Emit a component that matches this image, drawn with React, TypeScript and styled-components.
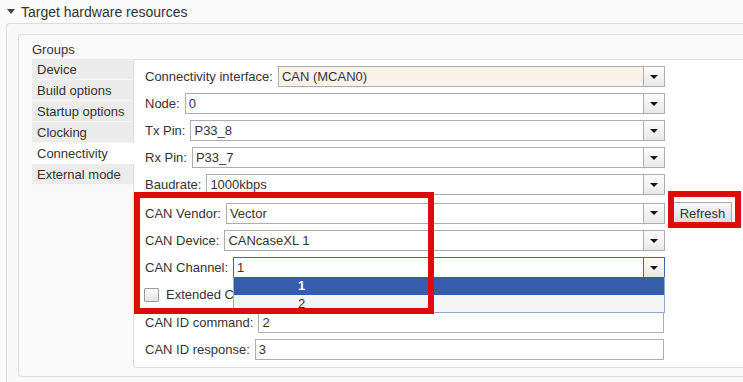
import React from 'react'
import styled, { createGlobalStyle } from 'styled-components'

const GlobalStyle = createGlobalStyle`
  body {
    margin: 0;
    background: #fafafa;
    font-family: 'Liberation Sans', Arial, sans-serif;
    color: #333;
  }
  * {
    box-sizing: border-box;
  }
`

const Page = styled.div`
  position: relative;
  width: 743px;
  height: 382px;
  overflow: hidden;
  background: #fafafa;
`

const SectionHeader = styled.div`
  display: flex;
  align-items: center;
  height: 23px;
  padding-left: 7px;
  font-size: 14px;
  color: #333;
`

const Caret = styled.span`
  width: 0;
  height: 0;
  margin-right: 6px;
  border-left: 4px solid transparent;
  border-right: 4px solid transparent;
  border-top: 5px solid #444;
`

const OuterBox = styled.div`
  margin-left: 6px;
  padding: 10px 0 0 11px;
  height: 370px;
  border: 1px solid #ddd;
  border-right: none;
  border-radius: 4px 0 0 0;
  background: #f9f9f9;
`

const GroupsBox = styled.div`
  padding: 6px 0 8px 13px;
  border: 1px solid #ddd;
  border-right: none;
  border-radius: 4px 0 0 4px;
  background: #fafafa;
`

const GroupsTitle = styled.div`
  height: 18px;
  font-size: 13px;
  line-height: 18px;
`

const GroupsBody = styled.div`
  display: flex;
`

const TabList = styled.div`
  display: flex;
  flex-direction: column;
  width: 101px;
  flex-shrink: 0;
`

const Tab = styled.div<{ active?: boolean }>`
  position: relative;
  z-index: 1;
  height: 21px;
  margin-right: ${({ active }) => (active ? '-1px' : '0')};
  padding-left: 5px;
  font-size: 13px;
  line-height: 21px;
  color: #333;
  background: ${({ active }) => (active ? '#fff' : '#ececec')};
  border-bottom: 1px solid ${({ active }) => (active ? '#fff' : '#f6f6f6')};
`

const ContentPanel = styled.div`
  flex: 1;
  height: 309px;
  padding: 6px 0 0 11px;
  background: #fff;
  border: 1px solid #ddd;
  border-right: none;
  border-radius: 0 0 0 4px;
`

const Form = styled.div`
  display: flex;
  flex-direction: column;
  gap: 6px;
`

const Row = styled.div<{ extraTop?: number }>`
  display: flex;
  align-items: center;
  margin-top: ${({ extraTop }) => extraTop ?? 0}px;
`

const FieldLine = styled.div`
  display: flex;
  align-items: center;
  width: 520px;
  height: 21px;
`

const Label = styled.span`
  margin-right: 5px;
  font-size: 13px;
  white-space: nowrap;
  color: #333;
`

const SelectBox = styled.div<{ tint?: boolean; focused?: boolean }>`
  position: relative;
  flex: 1;
  display: flex;
  height: 21px;
  border: 1px solid ${({ focused }) => (focused ? '#3b6aae' : '#adadad')};
  background: ${({ tint }) => (tint ? '#fbf3e9' : '#fff')};
`

const SelectValue = styled.span`
  flex: 1;
  padding-left: 3px;
  font-size: 13px;
  line-height: 19px;
  color: #333;
`

const DropButton = styled.span<{ focused?: boolean }>`
  display: flex;
  align-items: center;
  justify-content: center;
  width: 21px;
  border-left: 1px solid ${({ focused }) => (focused ? '#3b6aae' : '#adadad')};
  background: linear-gradient(#fdfdfd, #e8e8e8);
  &::after {
    content: '';
    width: 0;
    height: 0;
    border-left: 4px solid transparent;
    border-right: 4px solid transparent;
    border-top: 4px solid #111;
  }
`

const TextInput = styled.div`
  flex: 1;
  height: 21px;
  margin-right: 1px;
  padding-left: 3px;
  border: 1px solid #adadad;
  font-size: 13px;
  line-height: 19px;
  color: #333;
`

const RefreshButton = styled.button`
  height: 22px;
  width: 59px;
  margin-left: 8px;
  padding: 0;
  border: 1px solid #aaa;
  background: linear-gradient(#f8f8f8, #dcdcdc);
  font-family: 'Liberation Sans', Arial, sans-serif;
  font-size: 13px;
  color: #333;
`

const CheckBox = styled.span`
  width: 15px;
  height: 14px;
  margin: 0 7px 0 -1px;
  border: 1px solid #999;
  border-radius: 1px;
  background: linear-gradient(#fbfbfb, #e4e4e4);
`

const DropList = styled.div`
  position: absolute;
  z-index: 2;
  top: 100%;
  left: -1px;
  right: -1px;
  border: 1px solid #8aaed6;
  border-top: none;
  background: #f5f5f5;
`

const DropItem = styled.div<{ selected?: boolean }>`
  height: ${({ selected }) => (selected ? '18px' : '17px')};
  padding-left: 64px;
  font-size: 13px;
  line-height: 18px;
  font-weight: ${({ selected }) => (selected ? 'bold' : 'normal')};
  color: ${({ selected }) => (selected ? '#fff' : '#333')};
  background: ${({ selected }) => (selected ? '#365cab' : '#f5f5f5')};
`

const RedMark = styled.div<{ x: number; y: number; w: number; h: number }>`
  position: absolute;
  z-index: 5;
  left: ${({ x }) => x}px;
  top: ${({ y }) => y}px;
  width: ${({ w }) => w}px;
  height: ${({ h }) => h}px;
  border: 6px solid #e10a0a;
`

type SelectProps = {
  label: string
  value: string
  tint?: boolean
}

const SelectRow: React.FC<SelectProps & { extraTop?: number; children?: React.ReactNode }> = ({
  label,
  value,
  tint,
  extraTop,
  children,
}) => (
  <Row extraTop={extraTop}>
    <FieldLine>
      <Label>{label}</Label>
      <SelectBox tint={tint}>
        <SelectValue>{value}</SelectValue>
        <DropButton />
      </SelectBox>
    </FieldLine>
    {children}
  </Row>
)

const tabs = ['Device', 'Build options', 'Startup options', 'Clocking', 'Connectivity', 'External mode']

export default function App() {
  return (
    <>
      <GlobalStyle />
      <Page>
        <SectionHeader>
          <Caret />
          {'Target hardware resources'}
        </SectionHeader>
        <OuterBox>
          <GroupsBox>
            <GroupsTitle>{'Groups'}</GroupsTitle>
            <GroupsBody>
              <TabList>
                {tabs.map((t) => (
                  <Tab key={t} active={t === 'Connectivity'}>
                    {t}
                  </Tab>
                ))}
              </TabList>
              <ContentPanel>
                <Form>
                  <SelectRow label="Connectivity interface:" value="CAN (MCAN0)" tint />
                  <SelectRow label="Node:" value="0" />
                  <SelectRow label="Tx Pin:" value="P33_8" />
                  <SelectRow label="Rx Pin:" value="P33_7" />
                  <SelectRow label="Baudrate:" value="1000kbps" />
                  <SelectRow label="CAN Vendor:" value="Vector" extraTop={1}>
                    <RefreshButton type="button">{'Refresh'}</RefreshButton>
                  </SelectRow>
                  <SelectRow label="CAN Device:" value="CANcaseXL 1" />
                  <Row>
                    <FieldLine>
                      <Label>{'CAN Channel:'}</Label>
                      <SelectBox focused>
                        <SelectValue>{'1'}</SelectValue>
                        <DropButton focused />
                        <DropList>
                          <DropItem selected>{'1'}</DropItem>
                          <DropItem>{'2'}</DropItem>
                        </DropList>
                      </SelectBox>
                    </FieldLine>
                  </Row>
                  <Row>
                    <FieldLine>
                      <CheckBox />
                      <Label>{'Extended CAN ID'}</Label>
                    </FieldLine>
                  </Row>
                  <Row extraTop={1}>
                    <FieldLine>
                      <Label>{'CAN ID command:'}</Label>
                      <TextInput>{'2'}</TextInput>
                    </FieldLine>
                  </Row>
                  <Row>
                    <FieldLine>
                      <Label>{'CAN ID response:'}</Label>
                      <TextInput>{'3'}</TextInput>
                    </FieldLine>
                  </Row>
                </Form>
              </ContentPanel>
            </GroupsBody>
          </GroupsBox>
        </OuterBox>
        <RedMark x={134} y={192} w={300} h={122} />
        <RedMark x={668} y={191} w={73} h={37} />
      </Page>
    </>
  )
}
